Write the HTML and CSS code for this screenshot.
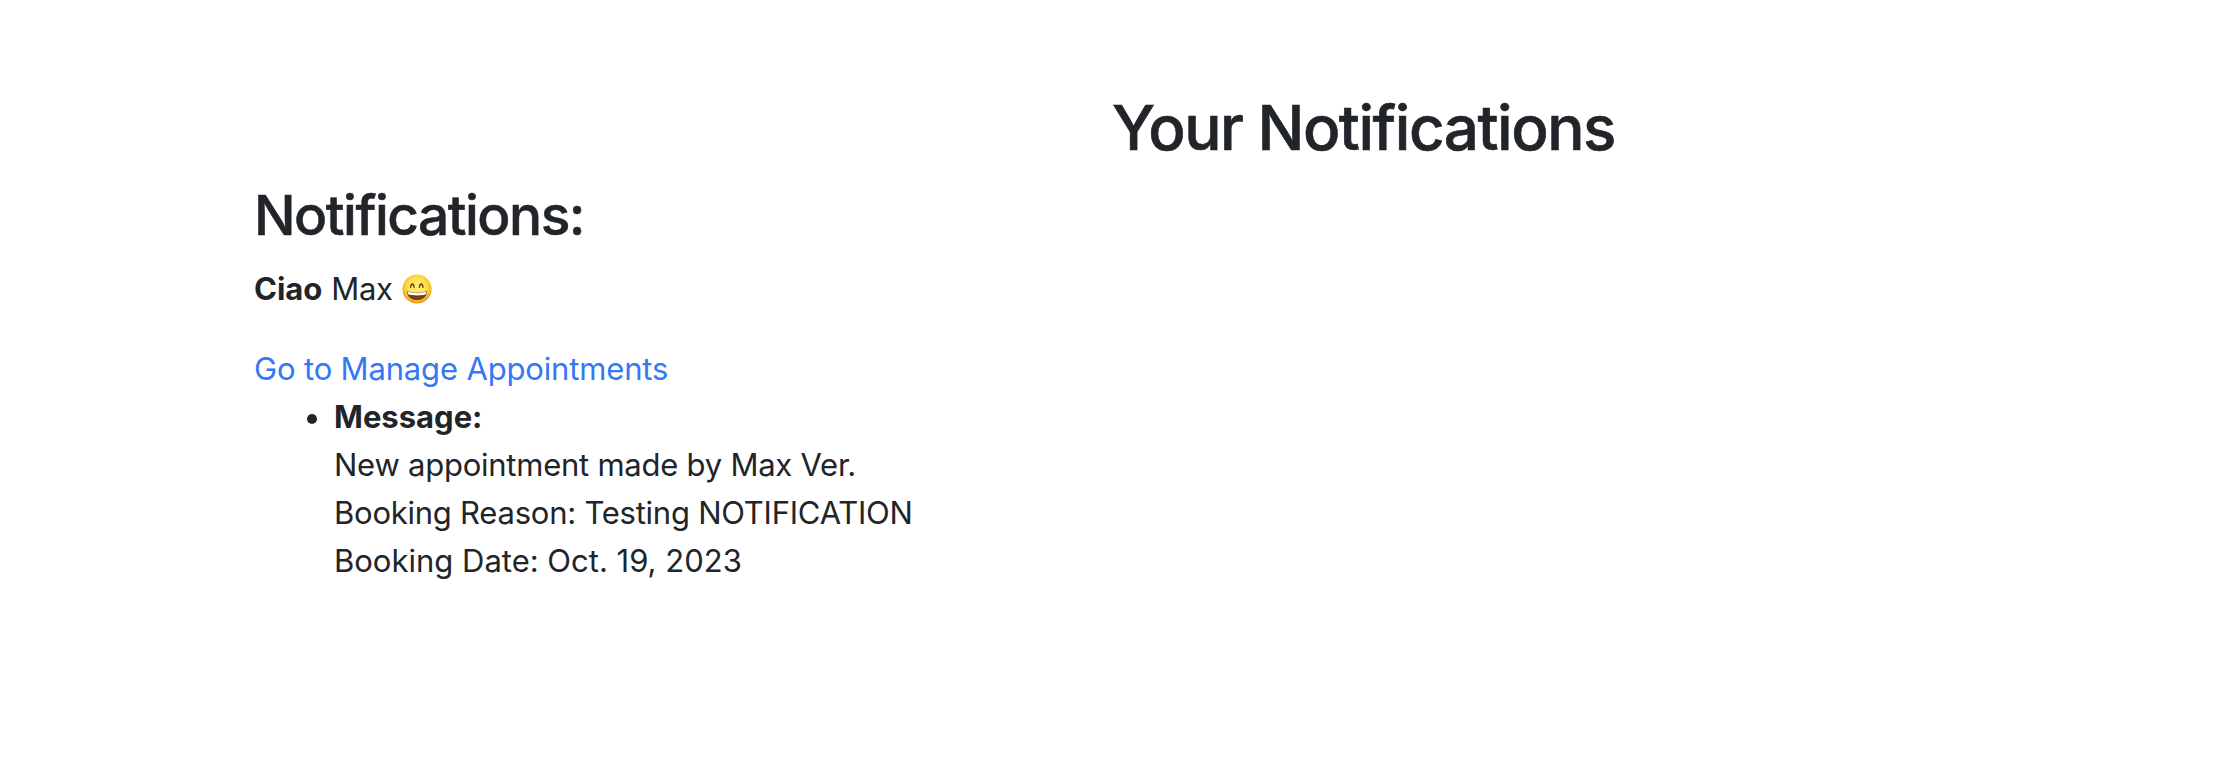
FILE: index.html
```html
<!DOCTYPE html>
<html lang="en">
<head>
<meta charset="utf-8">
<title>Your Notifications</title>
<link rel="stylesheet" href="styles.css">
</head>
<body>
<main class="page">
  <h1 class="title">Your Notifications</h1>
  <h2 class="subtitle">Notifications:</h2>
  <p class="greeting"><strong class="ciao">Ciao</strong> <span class="name">Max</span>
    <svg class="smile" viewBox="0 0 30 30" role="img" aria-label="Smiling face">
      <defs>
        <radialGradient id="face" cx="50%" cy="42%" r="56%">
          <stop offset="0" stop-color="#fff27a"/>
          <stop offset=".55" stop-color="#ffe04c"/>
          <stop offset=".82" stop-color="#fbc22c"/>
          <stop offset="1" stop-color="#ec9419"/>
        </radialGradient>
      </defs>
      <circle cx="15" cy="15" r="14.6" fill="url(#face)"/>
      <path d="M8.6 13.2c.3-2.3.9-3.2 1.8-3.2s1.5.9 1.8 3.2M17.4 13.2c.3-2.3.9-3.2 1.8-3.2s1.5.9 1.8 3.2" fill="none" stroke="#6b3a09" stroke-width="1.4" stroke-linecap="round"/>
      <path d="M4.900 17.200c3 .9 6.200 1.300 10.100 1.300s7.100-.4 10.100-1.300c-.2 5.300-4.300 8.900-10.100 8.900S5.100 22.500 4.900 17.200Z" fill="#7a3f10"/>
      <path d="M5.600 17.700c2.800.7 5.900 1 9.400 1s6.600-.3 9.400-1c0 1.500-.5 2.500-1.200 2.900-2.300.6-5 .8-8.200.8s-5.900-.2-8.200-.8c-.7-.4-1.200-1.400-1.200-2.900Z" fill="#fff"/>
    </svg>
  </p>
  <a class="link" href="#">Go to Manage Appointments</a>
  <ul class="list">
    <li class="item">
      <strong class="label">Message:</strong>
      <span class="line line-new">New appointment made by Max Ver.</span>
      <span class="line line-reason">Booking Reason: Testing NOTIFICATION</span>
      <span class="line line-date">Booking Date: Oct. 19, 2023</span>
    </li>
  </ul>
</main>
</body>
</html>
```
FILE: styles.css
```css
* { box-sizing: border-box; }
body {
  margin: 0;
  background: #fff;
  color: #212529;
  font: 400 31px/48px Inter, sans-serif;
}
.page { padding: 89px 0 0 254px; }
.title {
  margin: 0 0 16px 858px;
  font-size: 62px;
  line-height: 77px;
  font-weight: 500;
  letter-spacing: -1.5px;
  -webkit-text-stroke: .6px #212529;
}
.subtitle {
  margin: 0 0 16px;
  font-size: 55px;
  line-height: 67px;
  font-weight: 500;
  letter-spacing: -1.5px;
  -webkit-text-stroke: .5px #212529;
}
.greeting { margin: 0 0 32px; height: 48px; display: flex; align-items: center; }
.ciao { font-weight: 700; margin-right: 9px; }
.name { letter-spacing: -.4px; }
.smile { width: 30px; height: 30px; margin: -1px 0 0 10px; }
.link { display: block; color: #3478f6; text-decoration: none; letter-spacing: -.16px; }
.list { margin: 0; padding: 0 0 0 80px; list-style: none; }
.item { display: flex; flex-direction: column; align-items: flex-start; }
.label { position: relative; font-weight: 700; }
.line-new, .line-reason { letter-spacing: -.24px; }
.label::before {
  content: "";
  position: absolute;
  left: -27px;
  top: 21px;
  width: 10px;
  height: 10px;
  border-radius: 50%;
  background: #212529;
}
```
